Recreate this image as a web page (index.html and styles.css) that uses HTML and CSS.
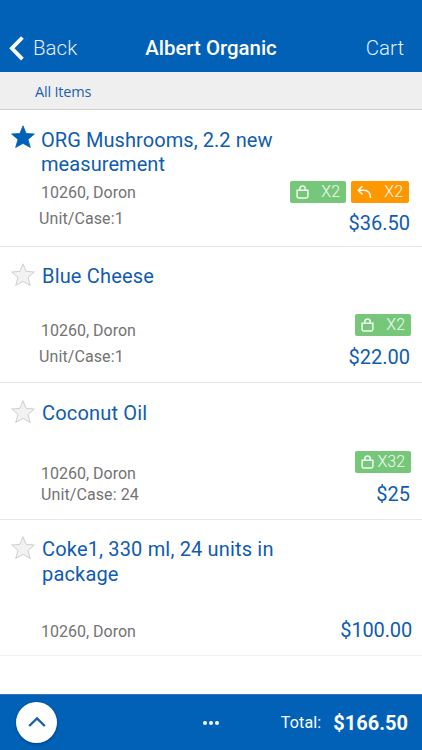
FILE: index.html
```
<!DOCTYPE html>
<html lang="en">
<head>
<meta charset="utf-8">
<title>Albert Organic</title>
<link rel="stylesheet" href="styles.css">
</head>
<body>
<svg class="defs" width="0" height="0" aria-hidden="true">
  <symbol id="star" viewBox="0 0 24 24"><path d="M12 .8 15.1 8.4 23.4 9 17 14.4 19.3 22.4 12 18.4 4.7 22.4 7 14.4 .6 9 8.9 8.4Z"/></symbol>
  <symbol id="bag" viewBox="0 0 13 14"><path d="M1.1 5.3h10.8v6q0 1.7-1.7 1.7H2.8q-1.7 0-1.7-1.7ZM3.8 5V3.7Q3.8 1 6.5 1T9.2 3.7V5"/></symbol>
  <symbol id="back-arrow" viewBox="0 0 15 14"><path d="M5.5 1 1.2 5.2 5.5 9.4M1.5 5.2H7Q13.4 5.4 13.6 13"/></symbol>
</svg>
<div class="app">
  <header class="topbar">
    <a class="back"><svg class="chevron" viewBox="0 0 15 25"><path d="M13.4 1.5 2.9 12.3 13.4 23.1"/></svg><span>Back</span></a>
    <h1 class="heading">Albert Organic</h1>
    <a class="cart">Cart</a>
  </header>
  <nav class="filter"><span>All Items</span></nav>
  <main class="list">
    <article class="item item-a">
      <svg class="star on"><use href="#star"/></svg>
      <h2 class="name">ORG Mushrooms, 2.2 new<br>measurement</h2>
      <div class="meta"><p>10260, Doron</p><p class="unit">Unit/Case:1</p></div>
      <div class="side">
        <div class="badges">
          <span class="badge"><svg class="bag"><use href="#bag"/></svg>X2</span>
          <span class="badge returned"><svg class="arrow"><use href="#back-arrow"/></svg>X2</span>
        </div>
        <p class="price">$36.50</p>
      </div>
    </article>
    <article class="item item-b">
      <svg class="star"><use href="#star"/></svg>
      <h2 class="name">Blue Cheese</h2>
      <div class="meta"><p>10260, Doron</p><p class="unit">Unit/Case:1</p></div>
      <div class="side">
        <div class="badges"><span class="badge"><svg class="bag"><use href="#bag"/></svg>X2</span></div>
        <p class="price">$22.00</p>
      </div>
    </article>
    <article class="item item-c">
      <svg class="star"><use href="#star"/></svg>
      <h2 class="name">Coconut Oil</h2>
      <div class="meta"><p>10260, Doron</p><p class="case">Unit/Case: 24</p></div>
      <div class="side">
        <div class="badges"><span class="badge"><svg class="bag"><use href="#bag"/></svg>X32</span></div>
        <p class="price">$25</p>
      </div>
    </article>
    <article class="item item-d">
      <svg class="star"><use href="#star"/></svg>
      <h2 class="name">Coke1, 330 ml, 24 units in<br>package</h2>
      <div class="meta"><p>10260, Doron</p></div>
      <div class="side"><p class="price">$100.00</p></div>
    </article>
  </main>
  <footer class="bottombar">
    <button class="up" aria-label="Expand"><svg viewBox="0 0 18 12"><path d="M1.2 10 9 2.4 16.8 10"/></svg></button>
    <div class="dots"><i></i><i></i><i></i></div>
    <div class="total"><span class="label">Total:</span><strong>$166.50</strong></div>
  </footer>
</div>
</body>
</html>
```
FILE: styles.css
```
* { box-sizing: border-box; margin: 0; padding: 0; }
body { font-family: Roboto, "Liberation Sans", sans-serif; background: #fff; }
.defs { display: block; }
.app { height: 750px; display: flex; flex-direction: column; overflow: hidden; }

.topbar {
  height: 72px; padding: 24px 18px 0 9px; flex: none;
  display: grid; grid-template-columns: 1fr auto 1fr; align-items: center;
  background: #0061b7; color: #fff;
}
.back { display: flex; align-items: center; gap: 9px; }
.back, .cart { font-size: 20.5px; font-weight: 300; color: #e4effa; }
.chevron { width: 15px; height: 25px; fill: none; stroke: #fff; stroke-width: 3.8; }
.heading { font-size: 20.4px; font-weight: 500; margin-left: 9px; }
.cart { text-align: right; }

.filter {
  height: 38px; flex: none; padding: 1px 0 0 35px;
  display: flex; align-items: center;
  background: #efefef; border-bottom: 1px solid #d0d0d0;
  font: 14.5px "Open Sans", "Noto Sans", sans-serif; letter-spacing: -.2px; color: #1f5fae;
}

.list { flex: 1; }
.item {
  height: 136.5px; padding: 17.5px 12px 0 11px;
  display: grid; grid-template-columns: 30px 1fr auto; grid-template-rows: auto 1fr;
  border-bottom: 1px solid #e6e6e6;
}
.item:last-child { border-bottom-color: #f1f1f1; }
.star { width: 24px; height: 24px; margin-top: -1px; fill: #f2f2f2; stroke: #c4c4c4; stroke-width: .8; }
.star.on { margin-top: -3px; fill: #0061b7; stroke: #0061b7; }
.name { grid-column: 2 / 4; font-size: 20px; font-weight: 400; line-height: 24.5px; color: #0f5cb0; letter-spacing: .17px; padding-left: 1px; }
.item-a .name { padding-left: 0; letter-spacing: .07px; }
.meta { grid-column: 2; align-self: end; font-size: 16px; line-height: 26px; color: #737373; }
.unit { margin-left: -2px; letter-spacing: .1px; }
.case { letter-spacing: .1px; }
.side { align-self: end; display: flex; flex-direction: column; align-items: flex-end; }
.price { font-size: 20px; line-height: 24px; color: #0f5cb0; }
.badges { display: flex; gap: 5px; margin-right: -1px; }
.badge {
  width: 56px; height: 21.5px; padding: 0 6px; border-radius: 2px;
  display: flex; align-items: center; justify-content: space-between;
  background: #76c77a; color: #f2fbf2; font-size: 16px; font-weight: 300;
}
.badge.returned { width: 58px; background: #ff9800; }
.bag, .arrow { height: 14px; fill: none; stroke: #effaef; stroke-width: 1.5; }
.bag { width: 13px; }
.arrow { width: 15px; }

.item-a .meta { padding-bottom: 14px; }
.item-a .side { padding-bottom: 11px; }
.item-a .badges { margin-right: 1px; }
.item-a .price { margin-top: 8px; }
.item-b .price { margin-top: 9.5px; }
.item-b .meta { padding-bottom: 12px; }
.item-b .side { padding-bottom: 13px; }
.item-c .meta { line-height: 21px; padding-bottom: 14px; }
.item-c .side { padding-bottom: 13px; }
.item-c .price { margin-top: 9px; }
.item-d .meta { padding-bottom: 10px; }
.item-d .side { padding-bottom: 13px; margin-right: -2px; }
.item-d .price { letter-spacing: -.15px; }

.bottombar {
  height: 56px; flex: none; padding: 0 14px 0 16px;
  display: grid; grid-template-columns: 1fr auto 1fr; align-items: center;
  background: #0061b7; border-top: 1px solid #3a76ba; color: #fff;
}
.up {
  width: 41px; height: 41px; border: 0; border-radius: 50%; background: #fff;
  display: flex; align-items: center; justify-content: center; padding-bottom: 2px;
  box-shadow: 0 1px 3px rgba(0, 20, 80, .45);
}
.up svg { width: 18px; height: 12px; fill: none; stroke: #1a5fae; stroke-width: 2.4; }
.dots { display: flex; gap: 2px; margin-right: 2px; padding-top: 1px; }
.dots i { width: 4.2px; height: 4.2px; border-radius: 50%; background: #fff; }
.total { display: flex; justify-content: flex-end; align-items: center; gap: 12px; }
.label { font-size: 16px; letter-spacing: .15px; }
.total strong { font-size: 20px; font-weight: 700; }
```
